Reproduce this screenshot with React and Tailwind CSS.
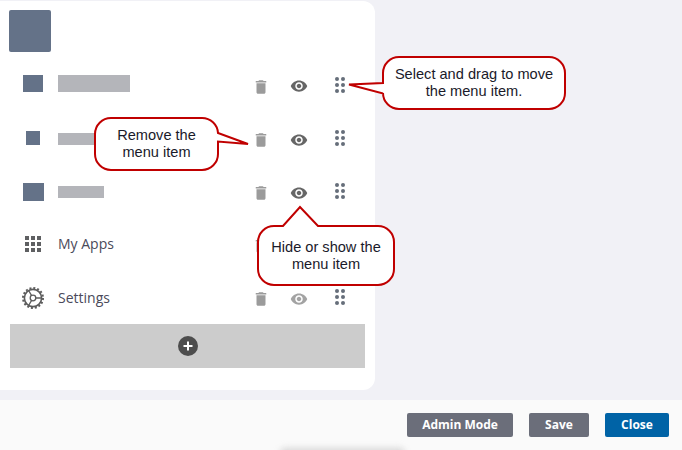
const Trash = () => (
  <svg width="18" height="18" viewBox="0 0 24 24" fill="#9b9b9b">
    <path d="M6 19c0 1.1.9 2 2 2h8c1.1 0 2-.9 2-2V7H6v12zM19 4h-3.5l-1-1h-5l-1 1H5v2h14V4z" />
  </svg>
);

const Eye = ({ color = "#666666" }) => (
  <svg width="18" height="18" viewBox="0 0 24 24" fill={color}>
    <path d="M12 4.5C7 4.5 2.73 7.61 1 12c1.73 4.39 6 7.5 11 7.5s9.27-3.11 11-7.5c-1.73-4.39-6-7.5-11-7.5zM12 17c-2.76 0-5-2.24-5-5s2.24-5 5-5 5 2.24 5 5-2.24 5-5 5zm0-8c-1.66 0-3 1.34-3 3s1.34 3 3 3 3-1.34 3-3-1.34-3-3-3z" />
  </svg>
);

const Grip = () => (
  <svg width="10" height="16" viewBox="0 0 10 16" fill="#666e7a">
    {[2, 8, 14].map((y) =>
      [2, 8].map((x) => <circle key={`${x}-${y}`} cx={x} cy={y} r="2" />)
    )}
  </svg>
);

const AppsIcon = () => (
  <svg width="16" height="16" viewBox="0 0 16 16" fill="#5f6062">
    {[0, 6, 12].map((y) =>
      [0, 6, 12].map((x) => <rect key={`${x}-${y}`} x={x} y={y} width="4" height="4" />)
    )}
  </svg>
);

const Gear = () => (
  <svg width="22" height="22" viewBox="0 0 22 22" fill="none" stroke="#5c5c5c">
    <circle cx="11" cy="11" r="8.6" strokeWidth="1.6" />
    <circle cx="11" cy="11" r="10" strokeWidth="2" strokeDasharray="2 1.93" />
    <circle cx="11" cy="11" r="2.8" strokeWidth="1.3" />
    <path d="M13.8 11H19.5M9.6 8.6L6.8 3.7M9.6 13.4L6.8 18.3" strokeWidth="1.3" />
  </svg>
);

const Callout = ({ box, width, height, d, lines, textClass }) => (
  <div className={`absolute ${box}`}>
    <svg width={width} height={height} viewBox={`0 0 ${width} ${height}`} className="absolute left-0 top-0 overflow-visible">
      <path d={d} fill="#ffffff" stroke="#c00000" strokeWidth="2" strokeLinejoin="miter" />
    </svg>
    <div className={`relative text-center text-[14.6px] leading-[17px] text-[#1a1a2a] font-['Liberation_Sans',Arial,sans-serif] ${textClass}`}>
      {lines.map((l) => (
        <div key={l}>{l}</div>
      ))}
    </div>
  </div>
);

const Row = ({ icon, label, eye, offset = "", eyeOffset = "translate-y-[1px]" }) => (
  <div className="flex h-[53px] items-center">
    <div className={`flex w-[250px] items-center ${offset}`}>
      <div className="flex w-[58px] justify-center pl-[8px]">{icon}</div>
      {label}
    </div>
    <div className="flex w-[22px] justify-center translate-y-[1px]">
      <Trash />
    </div>
    <div className={`flex w-[54px] justify-center ${eyeOffset}`}>
      <Eye color={eye} />
    </div>
    <div className="flex w-[28px] justify-center -translate-y-[1px]">
      <Grip />
    </div>
  </div>
);

const Text = ({ children }) => (
  <span className="text-[14px] text-[#4a4a5a] font-['Open_Sans',sans-serif]">{children}</span>
);

export default function App() {
  return (
    <div className="relative flex h-[450px] w-[682px] flex-col overflow-hidden bg-[#f1f1f6]">
      <div className="h-[400px] pt-[1px]">
        <div className="h-[389px] w-[375px] rounded-r-xl bg-white">
          <div className="pl-[9px] pt-[9px]">
            <div className="h-[42px] w-[42px] rounded-[2px] bg-[#647288]" />
          </div>
          <div className="mt-[7px]">
            <Row
              offset="-translate-y-[2px]"
              eyeOffset=""
              icon={<div className="h-[17px] w-[20px] bg-[#647288]" />}
              label={<div className="h-[17px] w-[72px] bg-[#b4b5ba]" />}
            />
            <Row
              icon={<div className="h-[14px] w-[14px] -translate-y-[1px] bg-[#647288]" />}
              label={<div className="h-[12px] w-[72px] bg-[#b4b5ba]" />}
            />
            <Row
              icon={<div className="h-[18px] w-[21px] bg-[#647288]" />}
              label={<div className="h-[12px] w-[46px] bg-[#b4b5ba]" />}
            />
            <Row offset="-translate-y-[1px]" icon={<AppsIcon />} label={<Text>My Apps</Text>} />
            <Row icon={<Gear />} label={<Text>Settings</Text>} eye="#a3a3a3" />
          </div>
          <div className="ml-[10px] flex h-[44px] w-[355px] items-center justify-center bg-[#cccccc]">
            <svg width="20" height="20" viewBox="0 0 20 20">
              <circle cx="10" cy="10" r="10" fill="#4d4d4d" />
              <path d="M10 5.5v9M5.5 10h9" stroke="#ffffff" strokeWidth="2" />
            </svg>
          </div>
        </div>
      </div>

      <div className="flex h-[50px] items-start justify-end gap-[16px] bg-[#fafafa] pr-[13px] pt-[13px] text-[12px] font-bold text-white font-['Open_Sans',sans-serif]">
        <div className="flex h-[24px] w-[106px] items-center justify-center rounded-[2px] bg-[#6b6e7a]">Admin Mode</div>
        <div className="flex h-[24px] w-[60px] items-center justify-center rounded-[2px] bg-[#6b6e7a]">Save</div>
        <div className="flex h-[24px] w-[64px] items-center justify-center rounded-[2px] bg-[#0063a6]">Close</div>
      </div>

      <div className="absolute left-[280px] top-[448px] h-[10px] w-[125px] rounded-full bg-[#d8d8d8] blur-[3px]" />

      <Callout
        box="left-[383px] top-[57px] h-[52px] w-[182px]"
        width={182}
        height={52}
        d="M16 0H166A16 16 0 0 1 182 16V36A16 16 0 0 1 166 52H16A16 16 0 0 1 0 36V36.5L-34 27.5L0 26V16A16 16 0 0 1 16 0Z"
        lines={["Select and drag to move", "the menu item."]}
        textClass="pt-[9px]"
      />
      <Callout
        box="left-[95px] top-[118px] h-[52px] w-[123px]"
        width={123}
        height={52}
        d="M16 0H107A16 16 0 0 1 123 15L153 26L123 23.5V36A16 16 0 0 1 107 52H16A16 16 0 0 1 0 36V16A16 16 0 0 1 16 0Z"
        lines={["Remove the", "menu item"]}
        textClass="pt-[9px]"
      />
      <Callout
        box="left-[258px] top-[226px] h-[59px] w-[136px]"
        width={136}
        height={59}
        d="M16 0H25L42 -19L60 0H120A16 16 0 0 1 136 16V43A16 16 0 0 1 120 59H16A16 16 0 0 1 0 43V16A16 16 0 0 1 16 0Z"
        lines={["Hide or show the", "menu item"]}
        textClass="pt-[13px]"
      />
    </div>
  );
}
